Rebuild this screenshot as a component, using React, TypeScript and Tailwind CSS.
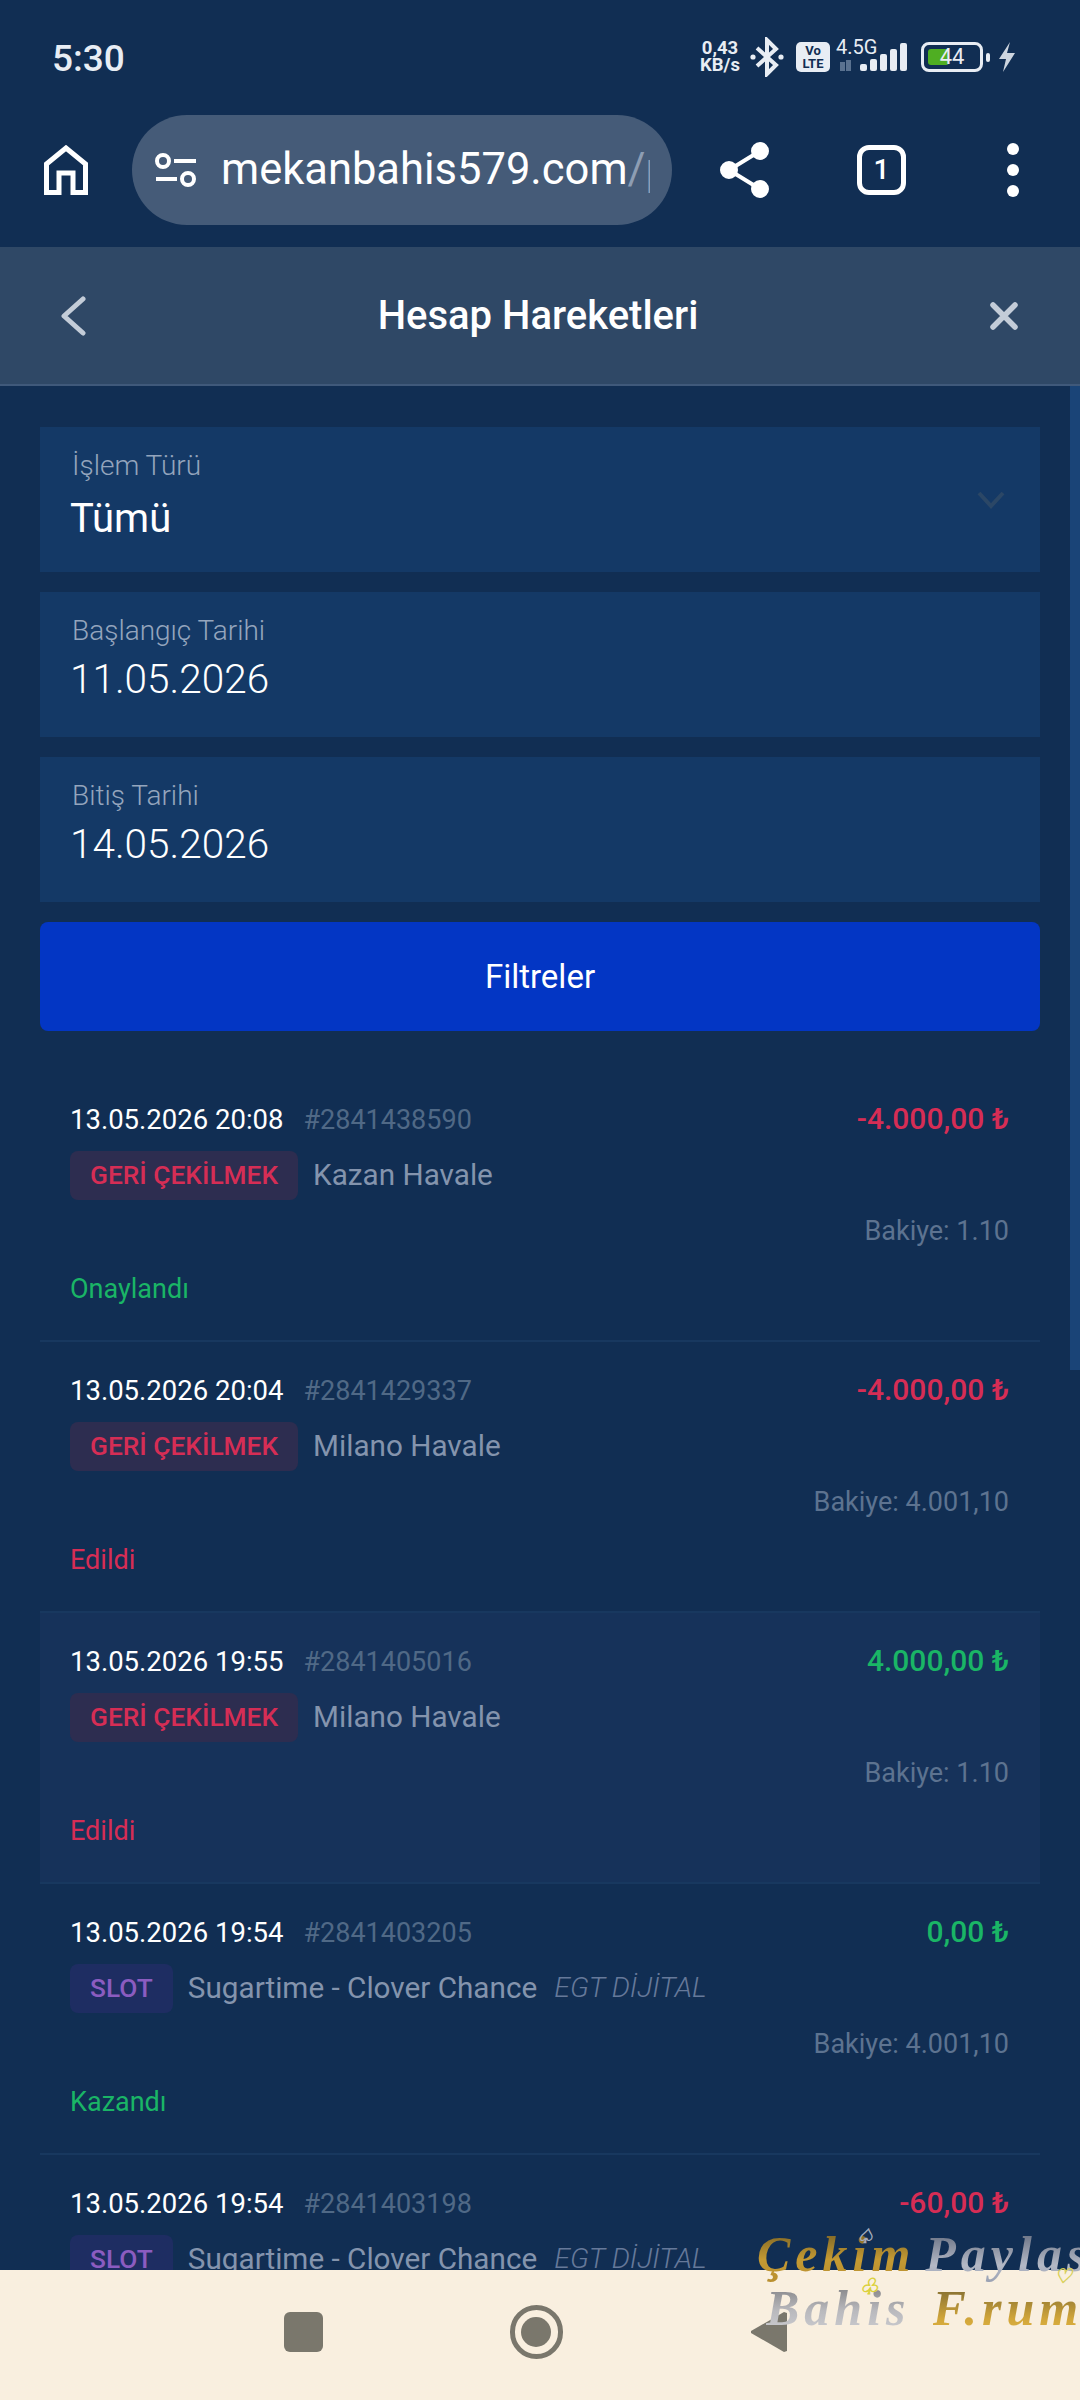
import React, { FC } from "react";

type Row = {
  date: string;
  id: string;
  amount: string;
  amountClass: string;
  badge: string;
  badgeClass: string;
  title: string;
  provider?: string;
  balance: string;
  status: string;
  statusClass: string;
  rowClass?: string;
};

const red = "text-[#d62d55]";
const green = "text-[#1ab566]";
const withdrawBadge = "bg-[#2d2d50] text-[#d62d55]";
const slotBadge = "bg-[#1e2d62] text-[#8b5cc0]";

const rows: Row[] = [
  {
    date: "13.05.2026 20:08",
    id: "#2841438590",
    amount: "-4.000,00 ₺",
    amountClass: red,
    badge: "GERİ ÇEKİLMEK",
    badgeClass: withdrawBadge,
    title: "Kazan Havale",
    balance: "Bakiye: 1.10",
    status: "Onaylandı",
    statusClass: green,
  },
  {
    date: "13.05.2026 20:04",
    id: "#2841429337",
    amount: "-4.000,00 ₺",
    amountClass: red,
    badge: "GERİ ÇEKİLMEK",
    badgeClass: withdrawBadge,
    title: "Milano Havale",
    balance: "Bakiye: 4.001,10",
    status: "Edildi",
    statusClass: red,
  },
  {
    date: "13.05.2026 19:55",
    id: "#2841405016",
    amount: "4.000,00 ₺",
    amountClass: green,
    badge: "GERİ ÇEKİLMEK",
    badgeClass: withdrawBadge,
    title: "Milano Havale",
    balance: "Bakiye: 1.10",
    status: "Edildi",
    statusClass: red,
    rowClass: "bg-[#16325a]",
  },
  {
    date: "13.05.2026 19:54",
    id: "#2841403205",
    amount: "0,00 ₺",
    amountClass: green,
    badge: "SLOT",
    badgeClass: slotBadge,
    title: "Sugartime - Clover Chance",
    provider: "EGT DİJİTAL",
    balance: "Bakiye: 4.001,10",
    status: "Kazandı",
    statusClass: green,
  },
  {
    date: "13.05.2026 19:54",
    id: "#2841403198",
    amount: "-60,00 ₺",
    amountClass: red,
    badge: "SLOT",
    badgeClass: slotBadge,
    title: "Sugartime - Clover Chance",
    provider: "EGT DİJİTAL",
    balance: "Bakiye: 4.001,10",
    status: "Kazandı",
    statusClass: green,
  },
];

const StatusBar: FC = () => (
  <div className="h-[93px] flex items-start justify-between pl-[52px] pr-[64px] pt-[37px] text-[#e8edf4]">
    <div className="text-[37px] leading-[44px] font-medium">5:30</div>
    <div className="flex items-center h-[40px]">
      <div className="w-[44px] text-[18.5px] leading-[17px] font-bold text-center">
        <div>0,43</div>
        <div>KB/s</div>
      </div>
      <svg width="36" height="40" viewBox="0 0 36 40" className="ml-[7px]" fill="none" stroke="#e8edf4" strokeWidth="4">
        <path d="M8 11 L27 28 L18 37 V3 L27 12 L8 29" />
        <circle cx="4" cy="20" r="2.6" fill="#e8edf4" stroke="none" />
        <circle cx="32" cy="20" r="2.6" fill="#e8edf4" stroke="none" />
      </svg>
      <div className="ml-[11px] w-[34px] h-[30px] rounded-[5px] bg-[#e8edf4] text-[#112e53] text-[13px] leading-[13px] font-bold text-center pt-[2px]">
        <div>Vo</div>
        <div>LTE</div>
      </div>
      <div className="ml-[6px] relative w-[72px] h-[32px]">
        <div className="absolute left-0 top-[-4px] text-[20px] leading-[20px]">4.5G</div>
        <svg width="72" height="32" viewBox="0 0 72 32" className="absolute left-0 top-0" fill="#e8edf4">
          <path d="M4 21 h5 v9 h-5z M10 19 h5 v11 h-5z" fill="#5a7290" />
          <rect x="24" y="23" width="7" height="7" rx="2" />
          <rect x="34" y="18" width="7" height="12" rx="2" />
          <rect x="44" y="13" width="7" height="17" rx="2" />
          <rect x="54" y="8" width="7" height="22" rx="2" />
          <rect x="64" y="2" width="7" height="28" rx="2" />
        </svg>
      </div>
      <div className="ml-[13px] relative w-[62px] h-[30px] rounded-[8px] border-[3px] border-[#e8edf4] flex items-center justify-center">
        <div className="absolute left-[4px] top-[4px] bottom-[4px] w-[21px] rounded-[3px] bg-[#4fae22]" />
        <div className="relative text-[22px] leading-none">44</div>
      </div>
      <div className="ml-[3px] w-[4px] h-[9px] rounded-[2px] bg-[#e8edf4]" />
      <svg width="18" height="30" viewBox="0 0 18 30" className="ml-[8px]" fill="#cdd5df">
        <path d="M12 0 L1 17 H8 L5 30 L17 11 H9 Z" />
      </svg>
    </div>
  </div>
);

const BrowserBar: FC = () => (
  <div className="h-[154px] flex items-center pl-[44px]">
    <svg width="44" height="50" viewBox="0 0 44 50" fill="none" stroke="#fff" strokeWidth="5">
      <path d="M2.500 47.500 V19 L22 3 L41.500 19 V47.500 H29 V28 H15 V47.500 Z" />
    </svg>
    <div className="ml-[44px] w-[540px] h-[110px] rounded-[55px] bg-[#455b78] flex items-center pl-[23px] pr-[22px] overflow-hidden">
      <svg width="42" height="34" viewBox="0 0 42 34" className="shrink-0" fill="none" stroke="#fff" strokeWidth="4">
        <circle cx="8" cy="8" r="6" />
        <path d="M19 8 H41" />
        <path d="M1 26 H22" />
        <circle cx="33" cy="26" r="6" />
      </svg>
      <div className="ml-[24px] text-[43.5px] leading-[50px] text-white whitespace-nowrap overflow-hidden">
        mekanbahis579.com<span className="text-[#8d9db3]">/p</span>
      </div>
    </div>
    <svg width="52" height="56" viewBox="0 0 52 56" className="ml-[47px]" fill="#fff" stroke="#fff" strokeWidth="4">
      <path d="M41 9 L10 28 L41 47" fill="none" />
      <circle cx="41" cy="9" r="7" />
      <circle cx="10" cy="28" r="7" />
      <circle cx="41" cy="47" r="7" />
    </svg>
    <div className="ml-[86px] w-[49px] h-[50px] rounded-[12px] border-[5px] border-white flex items-center justify-center text-white text-[28px] font-medium">
      1
    </div>
    <div className="ml-[101px] flex flex-col gap-[9px]">
      <div className="w-[12px] h-[12px] rounded-full bg-white" />
      <div className="w-[12px] h-[12px] rounded-full bg-white" />
      <div className="w-[12px] h-[12px] rounded-full bg-white" />
    </div>
  </div>
);

const Header: FC = () => (
  <div className="h-[139px] bg-[#2f4866] border-b-2 border-[#40597a] flex items-center justify-between pl-[60px] pr-[62px]">
    <svg width="26" height="40" viewBox="0 0 26 40" fill="none" stroke="#c3ccd8" strokeWidth="5" strokeLinecap="round" strokeLinejoin="round">
      <path d="M23 3 L4 20 L23 37" />
    </svg>
    <div className="text-[40px] leading-[46px] font-medium text-white">Hesap Hareketleri</div>
    <svg width="28" height="28" viewBox="0 0 28 28" fill="none" stroke="#c3ccd8" strokeWidth="5.500" strokeLinecap="round">
      <path d="M3 3 L25 25 M25 3 L3 25" />
    </svg>
  </div>
);

const FilterCard: FC<{ label: string; value: string; valueClass: string; chevron?: boolean }> = ({ label, value, valueClass, chevron }) => (
  <div className="h-[145px] bg-[#143966] pl-[30px] pr-[37px] relative">
    <div className="pl-[2px] pt-[23px] text-[28px] leading-[32px] font-light text-[#94a5bd]">{label}</div>
    <div className={`text-white ${valueClass}`}>{value}</div>
    {chevron && (
      <svg width="28" height="18" viewBox="0 0 28 18" className="absolute right-[35px] top-[64px]" fill="none" stroke="#2b4766" strokeWidth="4">
        <path d="M2 2 L14 15 L26 2" />
      </svg>
    )}
  </div>
);

const TxRow: FC<{ row: Row }> = ({ row }) => (
  <div className={`h-[271px] shrink-0 border-b-2 border-[#18385f] pl-[30px] pr-[31px] pt-[34px] ${row.rowClass ?? ""}`}>
    <div className="flex items-center h-[30px] text-[27px] leading-[30px] whitespace-nowrap">
      <span className="text-white text-[27.5px] font-[450]">{row.date}</span>
      <span className="ml-[20px] text-[#506986]">{row.id}</span>
      <span className={`ml-auto pb-[2px] text-[30px] font-medium ${row.amountClass}`}>{row.amount}</span>
    </div>
    <div className="mt-[16px] flex items-center h-[49px] whitespace-nowrap">
      <span className={`h-[49px] rounded-[8px] px-[20px] flex items-center text-[26.3px] font-medium ${row.badgeClass}`}>{row.badge}</span>
      <span className="ml-[15px] text-[29.7px] text-[#8494ad]">{row.title}</span>
      {row.provider && <span className="ml-[17px] text-[28.5px] italic font-light text-[#66799a]">{row.provider}</span>}
    </div>
    <div className="mt-[16px] h-[30px] text-right text-[27px] leading-[30px] text-[#5d7390]">{row.balance}</div>
    <div className={`mt-[28px] h-[30px] text-[27px] leading-[30px] ${row.statusClass}`}>{row.status}</div>
  </div>
);

const Watermark: FC = () => (
  <div className="absolute left-[757px] top-[2226px] w-[323px] font-['Liberation_Serif',serif] italic font-bold whitespace-nowrap">
    <div className="relative h-[56px] flex text-[50px] leading-[56px] tracking-[5px]">
      <span className="bg-[linear-gradient(180deg,#6f5a22_0%,#c49a33_60%,#b98f2f_100%)] bg-clip-text text-transparent">Çekim</span>
      <span className="ml-[10px] bg-[linear-gradient(180deg,#596275_0%,#b4b9c6_70%,#9aa1b3_100%)] bg-clip-text text-transparent">Paylas</span>
      <span className="absolute left-[99px] top-[-2px] text-[20px] leading-[24px] text-[#a3adbd]">♤</span>
      <span className="absolute left-[297px] top-[38px] text-[20px] leading-[24px] text-[#d8cf5a]">♡</span>
    </div>
    <div className="relative mt-[-2px] h-[56px] pl-[9px] flex text-[50px] leading-[56px] tracking-[5px]">
      <span className="bg-[linear-gradient(180deg,#77777a_0%,#b9b9bd_55%,#cfcfd3_100%)] bg-clip-text text-transparent">Bahis</span>
      <span className="ml-[22px] bg-[linear-gradient(180deg,#6f6030_0%,#d2a63a_70%,#e0b544_100%)] bg-clip-text text-transparent">F.rum</span>
      <span className="absolute left-[102px] top-[-6px] text-[22px] leading-[26px] text-[#dbd13c]">♧</span>
    </div>
  </div>
);

const BottomNav: FC = () => (
  <div className="h-[130px] shrink-0 bg-[#f9efdf] flex items-center justify-center gap-[187px] pr-[10px] pb-[6px]">
    <div className="w-[39px] h-[40px] rounded-[6px] bg-[#7a776c]" />
    <div className="w-[53px] h-[54px] rounded-full border-[5px] border-[#7a776c] flex items-center justify-center">
      <div className="w-[30px] h-[30px] rounded-full bg-[#7a776c]" />
    </div>
    <svg width="37" height="40" viewBox="0 0 37 40" fill="#7a776c">
      <path d="M37 1 V39 L34 40 L1 21 V19 L34 0 Z" />
    </svg>
  </div>
);

const App: FC = () => {
  return (
    <div className="w-[1080px] h-[2400px] bg-[#112e53] flex flex-col overflow-hidden relative font-['Roboto',sans-serif]">
      <StatusBar />
      <BrowserBar />
      <Header />
      <div className="flex-1 min-h-0 overflow-hidden relative px-[40px] pt-[41px]">
        <div className="flex flex-col gap-[20px]">
          <FilterCard label="İşlem Türü" value="Tümü" valueClass="mt-[14px] text-[40px] leading-[46px]" chevron />
          <FilterCard label="Başlangıç Tarihi" value="11.05.2026" valueClass="mt-[9px] text-[40.5px] leading-[46px] font-light" />
          <FilterCard label="Bitiş Tarihi" value="14.05.2026" valueClass="mt-[9px] text-[40.5px] leading-[46px] font-light" />
          <div className="h-[109px] rounded-[8px] bg-[#0336c4] flex items-center justify-center text-[33px] font-[450] text-white">
            Filtreler
          </div>
        </div>
        <div className="mt-[40px] flex flex-col">
          {rows.map((row) => (
            <TxRow key={row.id} row={row} />
          ))}
        </div>
        <div className="absolute right-0 top-0 w-[10px] h-[984px] bg-[#1a4477]" />
      </div>
      <BottomNav />
      <Watermark />
    </div>
  );
};

export default App;
